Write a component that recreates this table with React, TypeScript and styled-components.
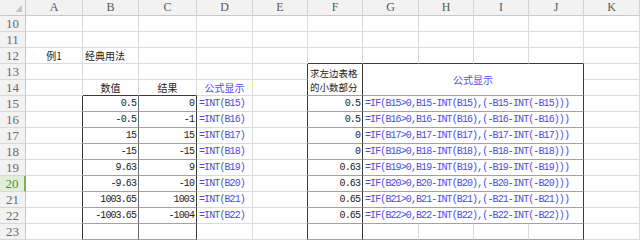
import { createGlobalStyle, styled } from "styled-components";

const GlobalStyle = createGlobalStyle`
  html, body {
    margin: 0;
    padding: 0;
    background: #fff;
  }
  body {
    font-family: "Noto Sans CJK SC", "Noto Sans", sans-serif;
  }
`;

const GRID = "#dadada";
const DARK = "#3a3a3a";
const MID = "#6a6a6a";
const INNER = "#a2a2a2";
const BLUE = "#4b4be6";

const COLS = [26, 57, 56, 58, 56, 55, 55, 56, 55, 55, 55, 56];
const LETTERS = ["A", "B", "C", "D", "E", "F", "G", "H", "I", "J", "K"];

const Sheet = styled.div`
  display: grid;
  grid-template-columns: ${COLS.map((w) => `${w}px`).join(" ")};
  grid-auto-rows: 16px;
  width: 640px;
  height: 240px;
  overflow: hidden;
  background: #fff;
`;

const Corner = styled.div`
  position: relative;
  background: #f2f2f2;
  border-right: 1px solid #c8c8c8;
  border-bottom: 1px solid #c8c8c8;
  box-sizing: border-box;

  svg {
    position: absolute;
    right: 3px;
    bottom: 3px;
  }
`;

const ColHead = styled.div`
  display: flex;
  align-items: center;
  justify-content: center;
  background: #f2f2f2;
  border-right: 1px solid #d4d4d4;
  border-bottom: 1px solid #c8c8c8;
  box-sizing: border-box;
  font-family: "Liberation Serif", serif;
  font-size: 12px;
  color: #5a5a5a;
`;

const RowHead = styled.div<{ $active?: boolean }>`
  display: flex;
  align-items: center;
  justify-content: center;
  background: ${(p) => (p.$active ? "#e1eedb" : "#f2f2f2")};
  border-right: ${(p) => (p.$active ? "2px solid #79b35c" : "1px solid #c8c8c8")};
  border-bottom: 1px solid #d8d8d8;
  box-sizing: border-box;
  font-family: "Liberation Serif", serif;
  font-size: 13px;
  color: ${(p) => (p.$active ? "#4f8f35" : "#6a6a6a")};
`;

type Align = "left" | "center" | "right";

const Cell = styled.div<{
  $r: string;
  $b: string;
  $align?: Align;
  $cs?: number;
  $rs?: number;
  $mono?: boolean;
  $blue?: boolean;
}>`
  display: flex;
  align-items: center;
  justify-content: ${(p) =>
    p.$align === "right" ? "flex-end" : p.$align === "center" ? "center" : "flex-start"};
  grid-column: span ${(p) => p.$cs ?? 1};
  grid-row: span ${(p) => p.$rs ?? 1};
  box-sizing: border-box;
  border-right: 1px solid ${(p) => p.$r};
  border-bottom: 1px solid ${(p) => p.$b};
  padding: 0 2px 0 2px;
  overflow: visible;
  white-space: nowrap;
  font-family: ${(p) =>
    p.$mono
      ? `"Liberation Mono", "Noto Sans CJK SC", monospace`
      : `"Noto Sans CJK SC", "Noto Sans", sans-serif`};
  font-size: 10px;
  letter-spacing: ${(p) => (p.$mono ? "-0.9px" : "0")};
  color: ${(p) => (p.$blue ? BLUE : "#222")};
`;

const TwoLine = styled.div`
  font-size: 9.5px;
  line-height: 14px;
  white-space: normal;
  color: #222;
`;

const valueB = ["0.5", "-0.5", "15", "-15", "9.63", "-9.63", "1003.65", "-1003.65"];
const valueC = ["0", "-1", "15", "-15", "9", "-10", "1003", "-1004"];
const valueF = ["0.5", "0.5", "0", "0", "0.63", "0.63", "0.65", "0.65"];

type Spec = {
  text?: React.ReactNode;
  align?: Align;
  cs?: number;
  rs?: number;
  mono?: boolean;
  blue?: boolean;
  b?: string;
};

// right border colour of column c (1=A ... 11=K) in row r
function rightColor(r: number, c: number) {
  if (r >= 15 && (c === 1 || c === 3)) return DARK;
  if (r >= 15 && c === 2) return MID;
  if (r >= 13 && (c === 5 || c === 6 || c === 10)) return DARK;
  return GRID;
}

function bottomColor(r: number, c: number) {
  if ((c === 2 || c === 3) && r === 14) return DARK;
  if ((c === 2 || c === 3) && r >= 15) return INNER;
  if (c >= 6 && c <= 10 && r === 12) return DARK;
  if (c >= 6 && c <= 10 && r >= 13) return INNER;
  return GRID;
}

function rowSpecs(r: number): (Spec | null)[] {
  const row: (Spec | null)[] = Array.from({ length: 11 }, () => ({}));
  const i = r - 15;
  if (r === 12) {
    row[0] = { text: "例1", align: "center" };
    row[1] = { text: "经典用法" };
  }
  if (r === 13) {
    row[5] = {
      rs: 2,
      text: (
        <TwoLine>
          求左边表格
          <br />
          的小数部分
        </TwoLine>
      ),
    };
    row[6] = { cs: 4, rs: 2, text: "公式显示", align: "center", blue: true };
    row[7] = row[8] = row[9] = null;
  }
  if (r === 14) {
    row[1] = { text: "数值", align: "center" };
    row[2] = { text: "结果", align: "center" };
    row[3] = { text: "公式显示", align: "center", blue: true };
    row[5] = row[6] = row[7] = row[8] = row[9] = null;
  }
  if (i >= 0 && i < 8) {
    const n = r;
    row[1] = { text: valueB[i], align: "right", mono: true };
    row[2] = { text: valueC[i], align: "right", mono: true };
    row[3] = { text: `=INT(B${n})`, mono: true, blue: true };
    row[5] = { text: valueF[i], align: "right", mono: true };
    row[6] = {
      cs: 4,
      mono: true,
      blue: true,
      text: `=IF(B${n}>0,B${n}-INT(B${n}),(-B${n}-INT(-B${n})))`,
    };
    row[7] = row[8] = row[9] = null;
  }
  return row;
}

const ROWS = Array.from({ length: 14 }, (_, k) => k + 10);

export default function App() {
  return (
    <>
      <GlobalStyle />
      <Sheet>
        <Corner>
          <svg width="7" height="7" viewBox="0 0 7 7">
            <polygon points="7,0 7,7 0,7" fill="#c4c4c4" />
          </svg>
        </Corner>
        {LETTERS.map((l) => (
          <ColHead key={l}>{l}</ColHead>
        ))}
        {ROWS.map((r) => (
          <RowGroup key={r} r={r} />
        ))}
      </Sheet>
    </>
  );
}

function RowGroup({ r }: { r: number }) {
  const specs = rowSpecs(r);
  return (
    <>
      <RowHead $active={r === 20}>{r}</RowHead>
      {specs.map((s, k) => {
        if (!s) return null;
        const c = k + 1;
        const last = c + (s.cs ?? 1) - 1;
        const rowLast = r + (s.rs ?? 1) - 1;
        return (
          <Cell
            key={c}
            $r={rightColor(rowLast, last)}
            $b={bottomColor(rowLast, c)}
            $align={s.align}
            $cs={s.cs}
            $rs={s.rs}
            $mono={s.mono}
            $blue={s.blue}
          >
            {s.text}
          </Cell>
        );
      })}
    </>
  );
}
